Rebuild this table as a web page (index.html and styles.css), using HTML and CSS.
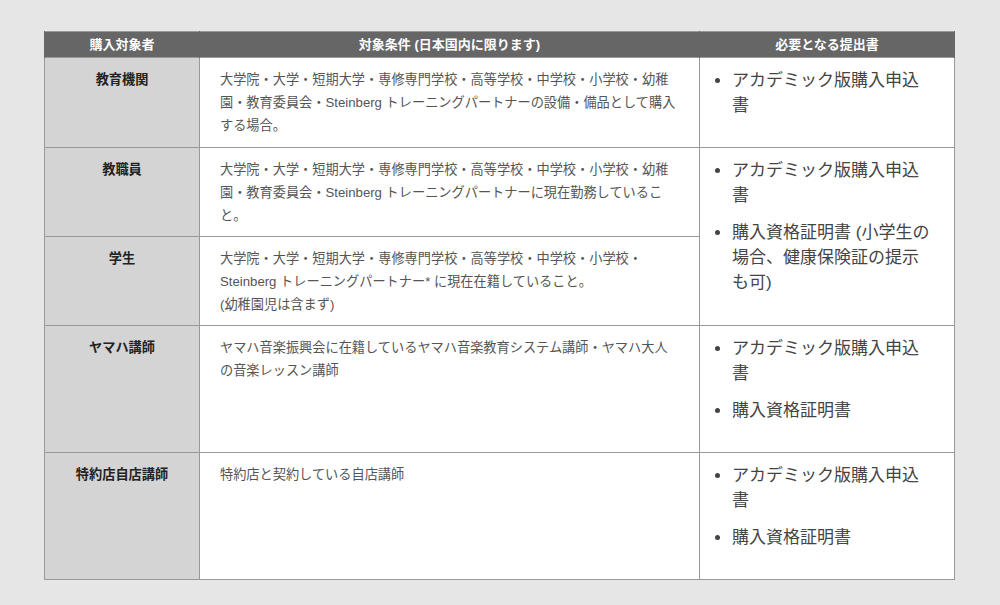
FILE: index.html
```html
<!DOCTYPE html>
<html lang="ja">
<head>
<meta charset="utf-8">
<link rel="stylesheet" href="styles.css">
</head>
<body>
<div class="wrap">
<table class="tbl">
  <colgroup>
    <col class="c1">
    <col class="c2">
    <col class="c3">
  </colgroup>
  <thead>
    <tr>
      <th>購入対象者</th>
      <th>対象条件 (日本国内に限ります)</th>
      <th>必要となる提出書</th>
    </tr>
  </thead>
  <tbody>
    <tr>
      <td class="who">教育機関</td>
      <td class="cond">大学院・大学・短期大学・専修専門学校・高等学校・中学校・小学校・幼稚園・教育委員会・Steinberg トレーニングパートナーの設備・備品として購入する場合。</td>
      <td class="docs"><ul><li>アカデミック版購入申込書</li></ul></td>
    </tr>
    <tr>
      <td class="who">教職員</td>
      <td class="cond">大学院・大学・短期大学・専修専門学校・高等学校・中学校・小学校・幼稚園・教育委員会・Steinberg トレーニングパートナーに現在勤務していること。</td>
      <td class="docs" rowspan="2"><ul><li>アカデミック版購入申込書</li><li>購入資格証明書 (小学生の場合、健康保険証の提示も可)</li></ul></td>
    </tr>
    <tr>
      <td class="who">学生</td>
      <td class="cond">大学院・大学・短期大学・専修専門学校・高等学校・中学校・小学校・Steinberg トレーニングパートナー* に現在在籍していること。<br>(幼稚園児は含まず)</td>
    </tr>
    <tr>
      <td class="who">ヤマハ講師</td>
      <td class="cond">ヤマハ音楽振興会に在籍しているヤマハ音楽教育システム講師・ヤマハ大人の音楽レッスン講師</td>
      <td class="docs"><ul><li>アカデミック版購入申込書</li><li>購入資格証明書</li></ul></td>
    </tr>
    <tr>
      <td class="who">特約店自店講師</td>
      <td class="cond">特約店と契約している自店講師</td>
      <td class="docs"><ul><li>アカデミック版購入申込書</li><li>購入資格証明書</li></ul></td>
    </tr>
  </tbody>
</table>
</div>
</body>
</html>
```
FILE: styles.css
```css
html, body {
  margin: 0;
  padding: 0;
  background: #e6e6e6;
}
body {
  font-family: "Liberation Sans", "Noto Sans CJK JP", sans-serif;
}
.wrap {
  padding: 31px 0 0 44px;
}
.tbl {
  width: 910px;
  border-collapse: collapse;
  table-layout: fixed;
  background: #fff;
  border: 1px solid #999;
}
.c1 { width: 155px; }
.c2 { width: 500px; }
.c3 { width: 255px; }
.tbl th,
.tbl td {
  box-sizing: border-box;
}
.tbl th {
  background: #666;
  color: #fff;
  font-size: 13px;
  font-weight: bold;
  line-height: 19px;
  padding: 3px 10px;
  text-align: center;
  border-left: 1px solid #666;
  border-right: 1px solid #666;
}
.tbl td {
  border: 1px solid #999;
  vertical-align: top;
}
.who {
  background: #d4d4d4;
  color: #222;
  font-size: 13.2px;
  font-weight: bold;
  line-height: 23px;
  text-align: center;
  padding: 10px 8px;
}
.cond {
  color: #555;
  font-size: 13.2px;
  line-height: 23px;
  padding: 10px 20px 9px 20px;
}
.docs {
  color: #444;
  font-size: 17px;
  line-height: 25px;
  padding: 10px 20px 17px 12px;
}
.docs ul {
  margin: 0;
  padding-left: 20px;
}
.docs li {
  margin-bottom: 12px;
}
```
